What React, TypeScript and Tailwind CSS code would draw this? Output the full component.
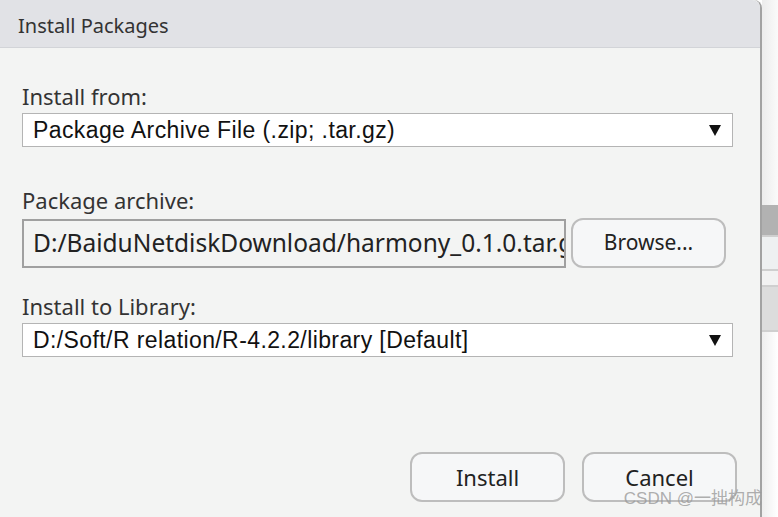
import React from 'react';

const ui = { fontFamily: '"Noto Sans", "Open Sans", sans-serif' };
const arial = { fontFamily: '"Liberation Sans", Arial, sans-serif', letterSpacing: '0.4px' };

const Caret = () => (
  <svg width="12" height="11" viewBox="0 0 12 11" className="shrink-0">
    <path d="M0 0 H12 L6 11 Z" fill="#111" />
  </svg>
);

const Select: React.FC<{ value: string }> = ({ value }) => (
  <div className="w-[711px] h-[34px] bg-white border border-[#b4b4b4] flex items-center justify-between pl-[10px] pr-[11px]">
    <span className="text-[23px] leading-[26px] text-[#111]" style={arial}>
      {value}
    </span>
    <Caret />
  </div>
);

const Button: React.FC<{ label: string; className?: string }> = ({ label, className }) => (
  <button
    className={`h-[50px] w-[155px] rounded-[12px] border-2 border-[#bdbdbd] bg-[#f6f7f8] text-[#222] flex items-center justify-center ${className ?? ''}`}
    style={ui}
  >
    {label}
  </button>
);

export default function App() {
  return (
    <div className="w-[778px] h-[517px] flex overflow-hidden bg-white">
      {/* Dialog */}
      <div className="relative w-[762px] h-full flex flex-col bg-[#f3f4f3] border-r-2 border-[#a2a2a2] rounded-tr-[8px]">
        <div className="h-[48px] shrink-0 bg-[#e1e2e6] border-b border-[#d2d4d8] rounded-tr-[8px] flex items-center px-[18px] pt-[4px]">
          <span className="text-[20px] text-[#333]" style={ui}>Install Packages</span>
        </div>

        <div className="flex flex-col px-[22px] pt-[36px]">
          <label className="text-[22px] leading-[24px] text-[#333] mb-[5px]" style={ui}>Install from:</label>
          <Select value="Package Archive File (.zip; .tar.gz)" />

          <label className="text-[22px] leading-[24px] text-[#333] mt-[41px] mb-[6px]" style={ui}>Package archive:</label>
          <div className="flex items-center gap-[5px]">
            <div className="w-[544px] h-[49px] border-2 border-[#a0a0a0] bg-[#f3f4f3] flex items-center pl-[9px] overflow-hidden whitespace-nowrap">
              <span className="text-[24.5px] text-[#222]" style={ui}>D:/BaiduNetdiskDownload/harmony_0.1.0.tar.gz</span>
            </div>
            <Button label="Browse..." className="w-[154px] text-[21px]" />
          </div>

          <label className="text-[22px] leading-[24px] text-[#333] mt-[26px] mb-[5px]" style={ui}>Install to Library:</label>
          <Select value="D:/Soft/R relation/R-4.2.2/library [Default]" />
        </div>

        <div className="mt-auto mb-[15px] flex justify-end gap-[17px] pr-[23px]">
          <Button label="Install" className="text-[22px]" />
          <Button label="Cancel" className="text-[22px]" />
        </div>

        <span
          className="absolute right-[-2px] bottom-[6px] text-[17px] text-[#9a9a9a]/80 pointer-events-none"
          style={{ fontFamily: '"Liberation Sans", "Noto Sans CJK SC", sans-serif' }}
        >
          CSDN @一拙构成
        </span>
      </div>

      {/* Window behind */}
      <div className="flex-1 flex flex-col bg-gradient-to-r from-[#e8e8e8] to-white">
        <div className="h-[205px] bg-gradient-to-r from-[#ececec] to-[#fafafa]" />
        <div className="h-[30px] bg-[#b2b2b2]" />
        <div className="h-[2px] bg-[#cfcfcf]" />
        <div className="h-[32px] bg-[#eef0f1]" />
        <div className="h-[2px] bg-[#cfcfcf]" />
        <div className="h-[14px] bg-[#f2f2f2]" />
        <div className="h-[2px] bg-[#cfcfcf]" />
        <div className="h-[43px] bg-[#dcdcdc]" />
        <div className="h-[2px] bg-[#cfcfcf]" />
        <div className="flex-1 bg-gradient-to-r from-[#eeeeee] to-white" />
      </div>
    </div>
  );
}
